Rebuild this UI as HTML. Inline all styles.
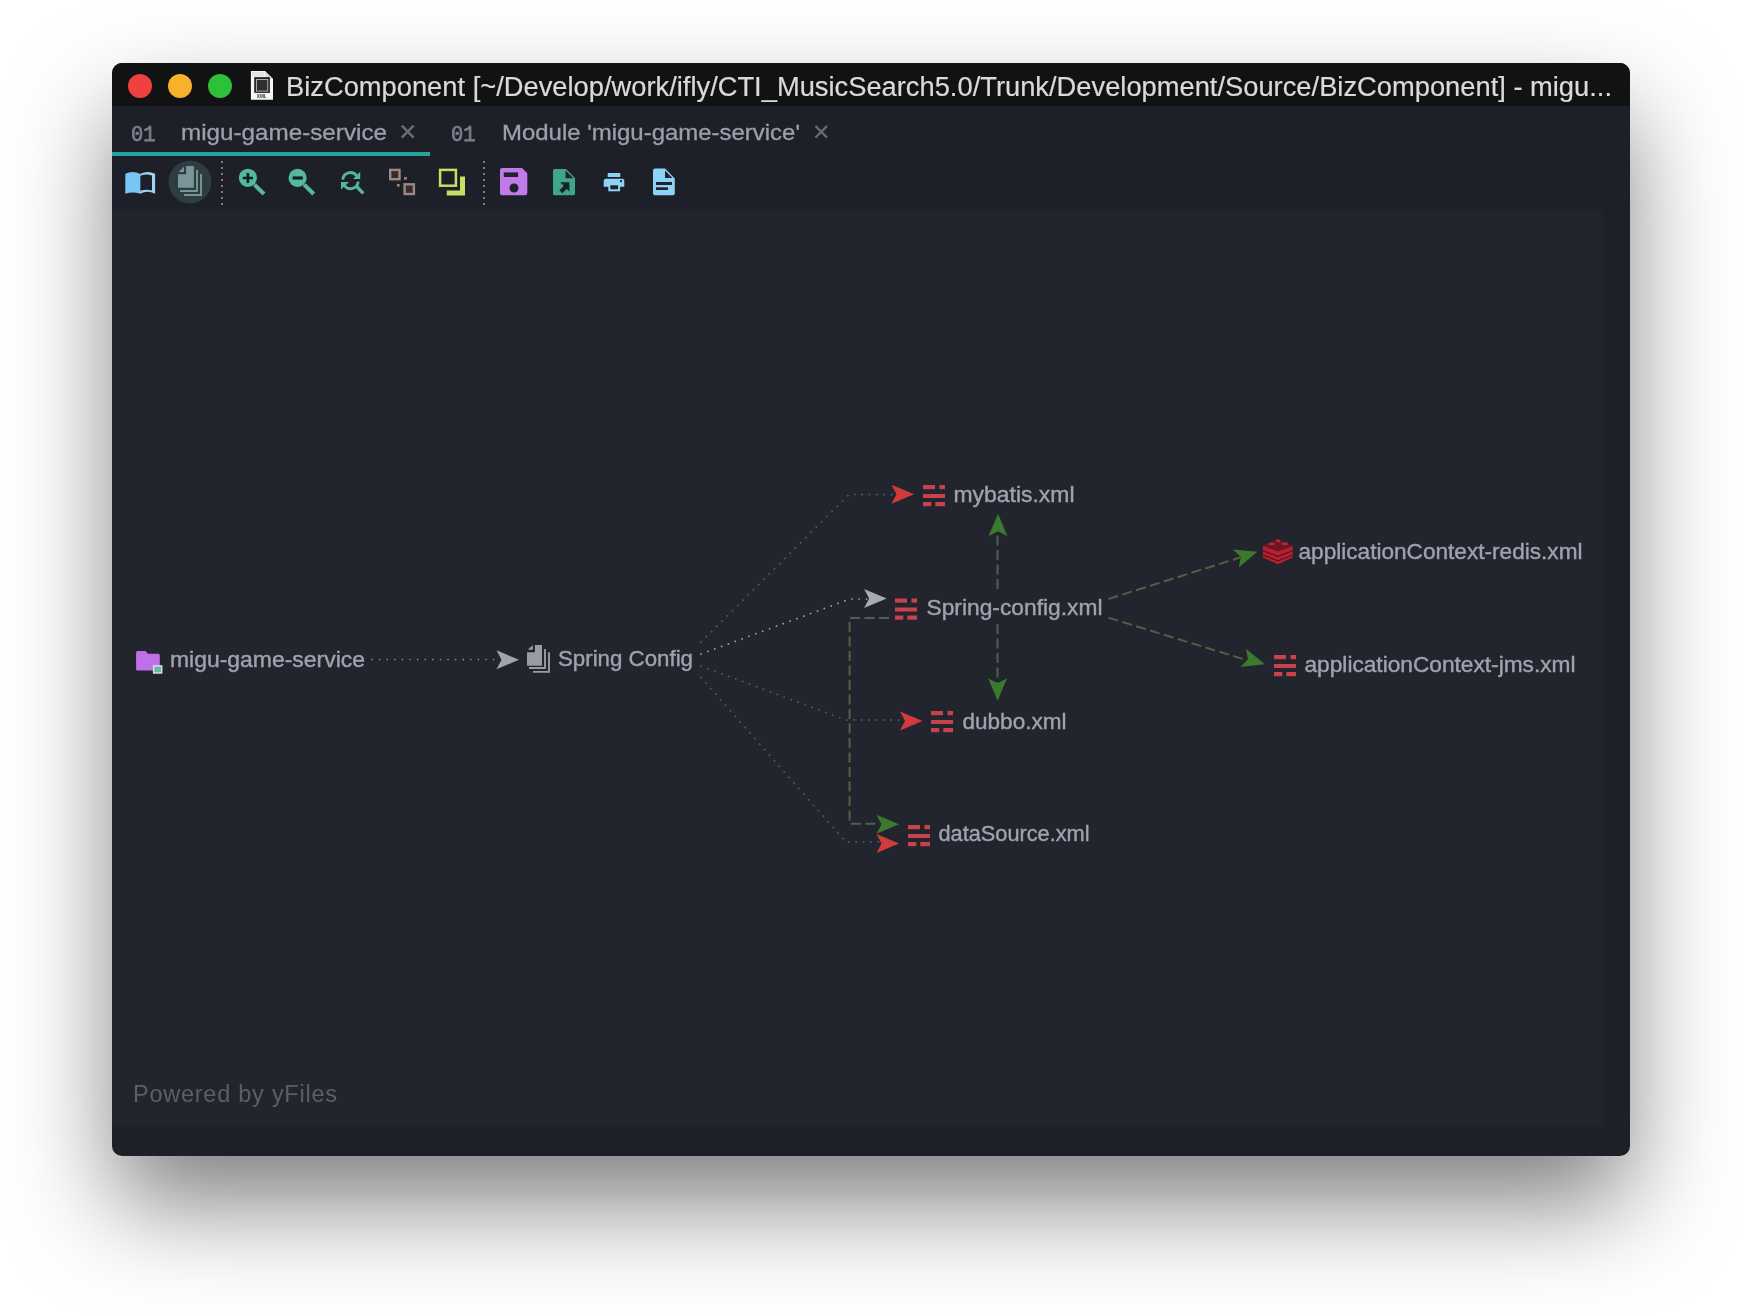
<!DOCTYPE html>
<html><head><meta charset="utf-8">
<style>
html,body{margin:0;padding:0;width:1742px;height:1316px;overflow:hidden;background:#ffffff;}
body{position:relative;font-family:"Liberation Sans",sans-serif;}
#win{position:absolute;left:112px;top:63px;width:1518px;height:1093px;border-radius:10px;background:#1d2029;
  box-shadow:0 50px 100px -2px rgba(0,0,0,0.5);overflow:hidden;}
#title{position:absolute;left:0;top:0;width:1518px;height:43px;background:#111214;}
#tabs{position:absolute;left:0;top:43px;width:1518px;height:50px;background:#1e2029;}
#toolbar{position:absolute;left:0;top:93px;width:1518px;height:54px;background:#1e2029;}
#canvas{position:absolute;left:0;top:148px;width:1488px;height:913px;background:#22252d;border-right:3px solid #20232b;border-bottom:4px solid #20232b;}
#ov{position:absolute;left:0;top:0;width:1742px;height:1316px;will-change:transform;}
</style></head>
<body>
<div id="win">
  <div id="title"></div>
  <div id="tabs"></div>
  <div id="toolbar"></div>
  <div id="canvas"></div>
</div>
<svg id="ov" width="1742" height="1316" viewBox="0 0 1742 1316" font-family="Liberation Sans, sans-serif">
  <defs>
    <path id="arr" d="M0,0 L-22.5,-9.5 L-17.5,0 L-22.5,9.5 Z"/>
    <g id="xml">
      <rect x="0" y="0" width="12" height="4.2"/>
      <rect x="16.5" y="0" width="5.5" height="4.2"/>
      <rect x="0" y="9" width="22" height="4"/>
      <rect x="0" y="17" width="8.3" height="4.2"/>
      <rect x="12.3" y="17" width="9.7" height="4.2"/>
    </g>
  </defs>

  <!-- ===== Title bar ===== -->
  <circle cx="140" cy="86" r="12" fill="#f0413e"/>
  <circle cx="180" cy="86" r="12" fill="#f9b02a"/>
  <circle cx="220" cy="86" r="12" fill="#2dc13a"/>
  <!-- doc icon -->
  <path d="M250.9,70.9 H264.9 L273,78.9 V99.8 H250.9 Z" fill="#f6f6f6"/>
  <path d="M264.9,70.9 L273,78.9 H265.5 Z" fill="#dcdcdc"/>
  <rect x="251.8" y="72" width="12.5" height="4.5" fill="#e2e2e4"/>
  <rect x="254.2" y="77.1" width="15.7" height="15.8" fill="#262626"/>
  <rect x="256.5" y="79.5" width="11.2" height="11.6" fill="#2e2e2e" stroke="#a8a8a8" stroke-width="1"/>
  <text x="256.8" y="97.8" font-size="4.6" font-weight="bold" fill="#333" textLength="9.9" lengthAdjust="spacingAndGlyphs">XML</text>
  <text x="286" y="96" font-size="27" fill="#dadada" stroke="#dadada" stroke-width="0.2" textLength="1326" lengthAdjust="spacingAndGlyphs">BizComponent [~/Develop/work/ifly/CTI_MusicSearch5.0/Trunk/Development/Source/BizComponent] - migu...</text>

  <!-- ===== Tabs ===== -->
  <text x="131" y="141" font-family="Liberation Mono, monospace" font-size="22.5" fill="#78818a" stroke="#78818a" stroke-width="0.75" textLength="24.5" lengthAdjust="spacingAndGlyphs">01</text>
  <text x="181" y="140" font-size="22.5" fill="#9ba0aa" stroke="#9ba0aa" stroke-width="0.3" textLength="206" lengthAdjust="spacingAndGlyphs">migu-game-service</text>
  <path d="M401.8,125.6 L413.6,137.6 M413.6,125.6 L401.8,137.6" stroke="#686d75" stroke-width="2.4"/>
  <rect x="112" y="152" width="318" height="4" fill="#26a59a"/>
  <text x="451" y="141" font-family="Liberation Mono, monospace" font-size="22.5" fill="#78818a" stroke="#78818a" stroke-width="0.75" textLength="24.5" lengthAdjust="spacingAndGlyphs">01</text>
  <text x="502" y="140" font-size="22.5" fill="#9ba0aa" stroke="#9ba0aa" stroke-width="0.3" textLength="298" lengthAdjust="spacingAndGlyphs">Module 'migu-game-service'</text>
  <path d="M815.5,126 L827,137.5 M827,126 L815.5,137.5" stroke="#686d75" stroke-width="2.4"/>

  <!-- ===== Toolbar ===== -->
  <!-- book -->
  <path d="M125.3,173.8 Q132.6,170.3 140.2,173.8 V193.7 Q132.6,191.2 125.3,193.7 Z" fill="#78c6f6"/>
  <path d="M140.2,173.9 Q147.6,170.4 155.1,173.8 V193.7 Q147.6,189.7 140.2,193.7 Z" fill="#a2d3f2"/>
  <path d="M140.4,175.7 Q146.2,173.6 152,175.5 V190.6 Q146.2,188.9 140.4,190.8 Z" fill="#1b212c"/>
  <!-- highlight circle + copy -->
  <circle cx="190" cy="182" r="21.5" fill="#2d3d42"/>
  <path d="M186.1,166.1 H193.9 V187.8 H178 V174.3 H186.1 Z" fill="#7b9497"/>
  <path d="M178.5,172 L184,166.8 V172 Z" fill="#7b9497"/>
  <path d="M197,170 V191 H180" fill="none" stroke="#7b9497" stroke-width="1.9"/>
  <path d="M201,174 V195 H184" fill="none" stroke="#7b9497" stroke-width="1.9"/>
  <!-- separator -->
  <line x1="222" y1="161" x2="222" y2="209" stroke="#7c7f86" stroke-width="2" stroke-dasharray="2 4"/>
  <!-- zoom in -->
  <circle cx="247.9" cy="177.8" r="9.1" fill="#55b7a0"/>
  <path d="M242.8,178 H253 M247.9,172.9 V183.1" stroke="#0f2222" stroke-width="2.7"/>
  <path d="M254.5,184.6 L264,194" stroke="#55b7a0" stroke-width="4.1"/>
  <!-- zoom out -->
  <circle cx="297.6" cy="177.9" r="9.1" fill="#55b7a0"/>
  <path d="M292.6,178 H302.8" stroke="#0f2222" stroke-width="3.2"/>
  <path d="M304.2,184.6 L313.7,194" stroke="#55b7a0" stroke-width="4.1"/>
  <!-- refresh zoom -->
  <path d="M342.8,179.6 A7.7,7.7 0 0 1 356.6,175.6" fill="none" stroke="#55b7a0" stroke-width="2.8"/>
  <path d="M353,178.9 L360.2,171.8 V178.9 Z" fill="#55b7a0"/>
  <path d="M358.2,181.6 A7.7,7.7 0 0 1 344.4,185.6" fill="none" stroke="#55b7a0" stroke-width="2.8"/>
  <path d="M341,182 H349 L341,189.4 Z" fill="#55b7a0"/>
  <path d="M356.8,186.8 L363.3,193.4" stroke="#55b7a0" stroke-width="3.4"/>
  <!-- layout icon -->
  <rect x="390.2" y="169.9" width="9.3" height="9.3" fill="#3b2b2a" stroke="#9b8985" stroke-width="2.4"/>
  <rect x="404.6" y="184.3" width="9.3" height="9.7" fill="#3b2b2a" stroke="#9b8985" stroke-width="2.4"/>
  <rect x="404.2" y="177" width="2.6" height="2.6" fill="#9b8985"/>
  <rect x="397" y="184" width="2.6" height="2.6" fill="#9b8985"/>
  <!-- yellow icon -->
  <rect x="440.1" y="169.9" width="15.8" height="15.8" fill="none" stroke="#c6df66" stroke-width="2.5"/>
  <path d="M460,176.6 H465 V195.5 H446.8 V190.5 H460 Z" fill="#c6df66"/>
  <!-- separator 2 -->
  <line x1="484" y1="161" x2="484" y2="206" stroke="#7c7f86" stroke-width="2" stroke-dasharray="2 4"/>
  <!-- save -->
  <path d="M502,168 H522 L527.3,173.3 V193 Q527.3,195.3 525,195.3 H502 Q500,195.3 500,193 V170 Q500,168 502,168 Z" fill="#c07ae9"/>
  <rect x="503.8" y="172.4" width="14.3" height="4.6" fill="#20232b"/>
  <circle cx="514" cy="188" r="4.5" fill="#20232b"/>
  <!-- export -->
  <path d="M554.5,169 H566 L575,178 V193.5 Q575,195.3 573.2,195.3 H554.5 Q553,195.3 553,193.5 V170.7 Q553,169 554.5,169 Z" fill="#3ea68d"/>
  <path d="M565.5,170.5 V178.2 H573.5 Z" fill="#20232b"/>
  <path d="M560.8,191.8 L566.2,186.4" stroke="#152622" stroke-width="4.2"/>
  <path d="M560.2,182.3 H569.4 V191.5 Z" fill="#152622"/>
  <!-- print -->
  <rect x="607.7" y="173" width="12.6" height="4" fill="#8dd3f5"/>
  <path d="M606,178.7 H622 Q624.3,178.7 624.3,181 V186.7 H603.7 V181 Q603.7,178.7 606,178.7 Z" fill="#8dd3f5"/>
  <rect x="609.3" y="184.3" width="9.8" height="6" fill="#20232b" stroke="#8dd3f5" stroke-width="2"/>
  <circle cx="621" cy="181.2" r="1.1" fill="#20232b"/>
  <!-- doc -->
  <path d="M655,168.6 H665 L674.8,178.4 V193.3 Q674.8,195.3 672.8,195.3 H655 Q653,195.3 653,193.3 V170.6 Q653,168.6 655,168.6 Z" fill="#8dd3f5"/>
  <path d="M665,170.6 V178 H672.5 Z" fill="#20232b"/>
  <rect x="656" y="182" width="16" height="3" fill="#20232b"/>
  <rect x="656" y="187.3" width="12" height="2.7" fill="#20232b"/>

  <!-- ===== Diagram edges ===== -->
  <g fill="none" stroke-linecap="round">
    <!-- migu -> Spring Config -->
    <path d="M372,659.6 H500" stroke="#8d9197" stroke-width="1.6" stroke-dasharray="0.1 7.5"/>
    <!-- spring config -> mybatis -->
    <path d="M701,642 L849,494.5 H895" stroke="#5e5462" stroke-width="1.8" stroke-dasharray="0.1 7.3"/>
    <!-- spring config -> spring-config.xml -->
    <path d="M701,654 L850,599 H868" stroke="#a2a6ae" stroke-width="1.7" stroke-dasharray="0.1 7.2"/>
    <!-- spring config -> dubbo -->
    <path d="M701,666 L846,720 H903" stroke="#5e5462" stroke-width="1.8" stroke-dasharray="0.1 7.3"/>
    <!-- spring config -> dataSource -->
    <path d="M701,677.5 L846,842 H879" stroke="#5e5462" stroke-width="1.8" stroke-dasharray="0.1 7.3"/>
  </g>
  <g fill="none" stroke="#4a6446" stroke-width="2" stroke-dasharray="10 4.5">
    <path d="M997.5,589 V530"/>
    <path d="M997.5,624 V685"/>
    <path d="M889,618 H849.6 V823.8 H880"/>
    <path d="M1108.5,599 L1240,557.5"/>
    <path d="M1108.5,617.7 L1248,660.5"/>
  </g>
  <!-- arrowheads -->
  <use href="#arr" transform="translate(519,659.8)" fill="#a0a4ac"/>
  <use href="#arr" transform="translate(914,494.2)" fill="#d23b3d"/>
  <use href="#arr" transform="translate(886.6,598.6)" fill="#a6abb3"/>
  <use href="#arr" transform="translate(922.5,721)" fill="#d23b3d"/>
  <use href="#arr" transform="translate(899,824.2)" fill="#3b7a2d"/>
  <use href="#arr" transform="translate(899,843.5)" fill="#d23b3d"/>
  <use href="#arr" transform="translate(998,513.7) rotate(-90)" fill="#3b7a2d"/>
  <use href="#arr" transform="translate(997.6,700.7) rotate(90)" fill="#3b7a2d"/>
  <use href="#arr" transform="translate(1257.4,551.7) rotate(-17.6)" fill="#3b7a2d"/>
  <use href="#arr" transform="translate(1264.8,664.2) rotate(16.5)" fill="#3b7a2d"/>

  <!-- ===== Nodes ===== -->
  <!-- migu folder -->
  <path d="M136.1,652.5 Q136.1,651 137.6,651 H145.5 L147.8,653.8 H158.3 Q159.8,653.8 159.8,655.3 V669 Q159.8,670.5 158.3,670.5 H137.6 Q136.1,670.5 136.1,669 Z" fill="#bf70e8"/>
  <rect x="153.6" y="665.9" width="8.1" height="7.1" fill="#6cb6a6" stroke="#d3e6e4" stroke-width="1.4"/>
  <text x="170" y="667" font-size="22" fill="#9ea3ae" stroke="#9ea3ae" stroke-width="0.4" textLength="195" lengthAdjust="spacingAndGlyphs">migu-game-service</text>
  <!-- spring config copy icon -->
  <path d="M534.9,644.9 H542 V665.8 H527 V652.2 H534.9 Z" fill="#979ca5"/>
  <path d="M527.8,649.7 L532.8,645 V649.7 Z" fill="#979ca5"/>
  <path d="M545,649.1 V668 H529" fill="none" stroke="#979ca5" stroke-width="1.9"/>
  <path d="M549,652.2 V671.9 H533" fill="none" stroke="#979ca5" stroke-width="1.9"/>
  <text x="558" y="666.3" font-size="22" fill="#9ea3ae" stroke="#9ea3ae" stroke-width="0.4" textLength="135" lengthAdjust="spacingAndGlyphs">Spring Config</text>
  <!-- mybatis -->
  <use href="#xml" transform="translate(923,485)" fill="#c8414b"/>
  <text x="953.5" y="502" font-size="22" fill="#9ea3ae" stroke="#9ea3ae" stroke-width="0.4" textLength="121" lengthAdjust="spacingAndGlyphs">mybatis.xml</text>
  <!-- spring-config.xml -->
  <use href="#xml" transform="translate(895,598.5)" fill="#c8414b"/>
  <text x="926.5" y="614.6" font-size="22" fill="#9ea3ae" stroke="#9ea3ae" stroke-width="0.4" textLength="176" lengthAdjust="spacingAndGlyphs">Spring-config.xml</text>
  <!-- redis -->
  <g>
    <path d="M1263,546 L1278,539.5 L1292.6,546 V557.5 L1278,564.3 L1263,557.5 Z" fill="#b32234"/>
    <path d="M1263,546 L1278,539.5 L1292.6,546 L1278,551.5 Z" fill="#6e1420"/>
    <path d="M1263,550.8 L1278,556.3 L1292.6,550.8 M1263,555 L1278,560.8 L1292.6,555" fill="none" stroke="#700a16" stroke-width="1.3"/>
    <ellipse cx="1278.1" cy="540.9" rx="2.2" ry="1.3" fill="#b82a45"/>
    <ellipse cx="1271.6" cy="543.8" rx="3.4" ry="1.5" fill="#a82a40"/>
    <ellipse cx="1284.8" cy="543.8" rx="3.2" ry="1.5" fill="#a82a40"/>
  </g>
  <text x="1298.5" y="559.2" font-size="22" fill="#9ea3ae" stroke="#9ea3ae" stroke-width="0.4" textLength="284" lengthAdjust="spacingAndGlyphs">applicationContext-redis.xml</text>
  <!-- jms -->
  <use href="#xml" transform="translate(1274,655)" fill="#c8414b"/>
  <text x="1304.5" y="671.6" font-size="22" fill="#9ea3ae" stroke="#9ea3ae" stroke-width="0.4" textLength="271" lengthAdjust="spacingAndGlyphs">applicationContext-jms.xml</text>
  <!-- dubbo -->
  <use href="#xml" transform="translate(931,711)" fill="#c8414b"/>
  <text x="962.5" y="728.7" font-size="22" fill="#9ea3ae" stroke="#9ea3ae" stroke-width="0.4" textLength="104" lengthAdjust="spacingAndGlyphs">dubbo.xml</text>
  <!-- dataSource -->
  <use href="#xml" transform="translate(908,825)" fill="#c8414b"/>
  <text x="938.5" y="841.4" font-size="22" fill="#9ea3ae" stroke="#9ea3ae" stroke-width="0.4" textLength="151" lengthAdjust="spacingAndGlyphs">dataSource.xml</text>

  <!-- powered by -->
  <text x="133" y="1102" font-size="23.5" fill="#5c5f66" textLength="204" lengthAdjust="spacing">Powered by yFiles</text>
</svg>
</body></html>
